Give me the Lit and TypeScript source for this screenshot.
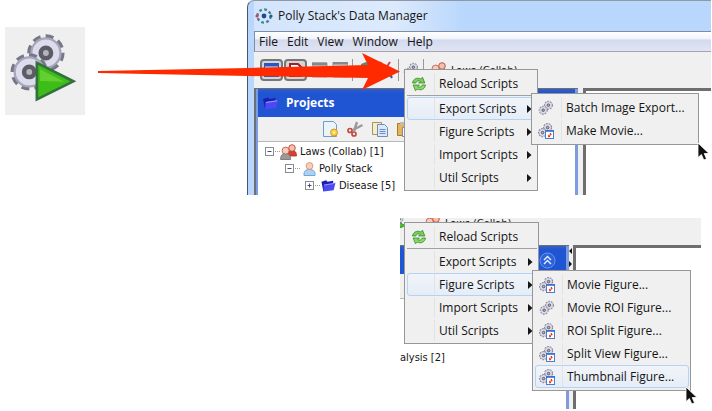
import { LitElement, html, svg, css, nothing } from "lit";
import { customElement, property } from "lit/decorators.js";

type Glyph = "gears" | "gears-window" | "reload" | "run" | "none";

interface Entry {
  label: string;
  icon?: Glyph;
  sub?: boolean;
  active?: boolean;
  divider?: boolean;
}

const gear = (x: number, y: number, r: number) => svg`
  <circle cx=${x} cy=${y} r=${r} fill="none" stroke="#77778a" stroke-width="1.100" stroke-dasharray="1.700 1.100"/>
  <circle cx=${x} cy=${y} r=${r * 0.9} fill="#dcdcec" stroke="#a6a6b8" stroke-width=".5"/>
  <circle cx=${x} cy=${y} r=${r * 0.32} fill="#b4b4bc" stroke="#5c5c66" stroke-width="1"/>`;

const glyphs: Record<Glyph, unknown> = {
  none: nothing,
  gears: svg`${gear(10.4, 5.2, 3.9)}${gear(5.2, 10.2, 3.9)}`,
  "gears-window": svg`${gear(9.6, 4.6, 4)}${gear(4.6, 9.6, 4)}
    <rect x="7.500" y="7.500" width="8" height="8" fill="#fff" stroke="#4a7fd0"/>
    <path d="M7 8h9" stroke="#3a6fc8" stroke-width="1.600"/>
    <path d="M12.200 10l1 1.400-1 1zM10.400 12.200l1.600 1-1.200 1z" fill="#e02a20" stroke="#e02a20" stroke-width=".8"/>`,
  reload: svg`
    <path d="M1.500 7C2 3 6 1 9.800 3L11.500 1.200l2.300 5.800H7.600l1.700-1.800C7.600 4.300 5.400 5 4.800 7z" fill="#7ccc58" stroke="#2f8a22" stroke-width=".8"/>
    <path d="M14.500 9c-.5 4-4.500 6-8.300 4L4.500 14.800 2.200 9h6.200l-1.700 1.800c1.700.9 3.900.2 4.500-1.800z" fill="#8cd868" stroke="#2f8a22" stroke-width=".8"/>`,
  run: svg`${gear(8.2, 4.2, 3.6)}${gear(4.5, 8.4, 3.6)}
    <path d="M6.200 6.400L14.300 10.500 6.200 14.500z" fill="#3ebc18" stroke="#34703c" stroke-width=".6"/>
    <path d="M6.900 7.800v2.600l5.400.2z" fill="#62d030"/>`,
};

const users = svg`
  <path d="M7.500 12c0-4 1.500-5.500 4.500-5.500s4.500 1.500 4.500 5.500z" fill="#d8402e" stroke="#a83226" stroke-width=".8"/>
  <circle cx="12" cy="4" r="3.300" fill="#f3c0ac" stroke="#bb4a3c" stroke-width=".9"/>
  <path d="M.6 15.500C.6 11 2.500 9.500 5.600 9.500s5 1.500 5 6z" fill="#9a9a9a" stroke="#6c6c6c" stroke-width=".8"/>
  <circle cx="5.600" cy="6.600" r="3.500" fill="#f6cdbb" stroke="#c0604e" stroke-width=".9"/>`;

const folder = svg`
  <path d="M1 4l5-1.500 1.500 1.500 6-1v9L3 14z" fill="#1d1db0"/>
  <path d="M3.500 7L16 5l-2 8-11 1.500z" fill="#4a4af4"/>
  <path d="M4 7.500L15 5.800" stroke="#9a9aff"/>`;

const shared = css`
  * { box-sizing: border-box; }
  button {
    font: inherit; color: inherit; background: none; border: 0;
    padding: 0; margin: 0; text-align: left; white-space: nowrap;
  }
  svg { display: block; flex: none; }
`;

@customElement("popup-menu")
export class PopupMenu extends LitElement {
  @property({ attribute: false }) entries: Entry[] = [];

  static styles = [shared, css`
    :host { display: block; }
    .menu {
      position: relative; height: 100%; padding: 2px 1px 2px 2px;
      background: #f0f0f0; border: 1px solid #979797;
      font: 12px/22px "Open Sans", "Noto Sans", sans-serif; color: #151515;
      display: flex; flex-direction: column;
    }
    .item {
      display: flex; align-items: center; height: 23px; width: 100%;
      padding: 0 3px; border: 1px solid transparent; border-radius: 3px;
    }
    .item.active {
      border-color: #b4d2f6;
      background: linear-gradient(#f1f4f9, #e6edf7);
    }
    .gutter {
      align-self: stretch; display: flex; align-items: center;
      width: 24px; margin-right: 4px; border-right: 1px solid #e2e3e3; flex: none;
    }
    .label { flex: 1; }
    .divider { height: 1px; margin: 0 0 1px; background: #a0a0a0; flex: none; }
  `];

  render() {
    return html`<div class="menu" role="menu">
      ${this.entries.map(e => html`
        <button class="item ${e.active ? "active" : ""}" role="menuitem">
          <span class="gutter"><svg width="16" height="16" viewBox="0 0 16 16">${glyphs[e.icon ?? "none"]}</svg></span>
          <span class="label">${e.label}</span>
          ${e.sub ? html`<svg width="5" height="8" viewBox="0 0 5 8"><path d="M0 0l4.500 4L0 8z" fill="#151515"/></svg>` : nothing}
        </button>
        ${e.divider ? html`<div class="divider" role="separator"></div>` : nothing}`)}
    </div>`;
  }
}

const scriptsMenu = (active: string): Entry[] => [
  { label: "Reload Scripts", icon: "reload", divider: true },
  ...["Export Scripts", "Figure Scripts", "Import Scripts", "Util Scripts"].map(label => ({
    label, sub: true, active: label === active,
  })),
];

const exportMenu: Entry[] = [
  { label: "Batch Image Export...", icon: "gears" },
  { label: "Make Movie...", icon: "gears-window" },
];

const figureMenu: Entry[] = [
  { label: "Movie Figure...", icon: "gears-window" },
  { label: "Movie ROI Figure...", icon: "gears" },
  { label: "ROI Split Figure...", icon: "gears-window" },
  { label: "Split View Figure...", icon: "gears-window" },
  { label: "Thumbnail Figure...", icon: "gears-window", active: true },
];

const pointer = html`<svg class="pointer" width="13" height="20" viewBox="0 0 13 20">
  <path d="M1 1v14.500l3.400-3 2.400 5.500 2.700-1.200L7.200 11.500H12z" fill="#111" stroke="#fff" stroke-width=".8"/></svg>`;

@customElement("app-root")
export class AppRoot extends LitElement {
  static styles = [shared, css`
    :host { display: block; background: #fff; color: #151515; font: 12px/16px "Open Sans", "Noto Sans", sans-serif; }
    .page { position: relative; display: flex; flex-direction: column; gap: 23px; min-height: 100vh; overflow: hidden; }
    .top { display: flex; align-items: flex-start; }
    .tile { margin: 27px 162px 0 5px; padding: 7px 4px; background: #efefef; flex: none; }
    .arrow { position: absolute; left: 98px; top: 53px; z-index: 3; }

    .window {
      position: relative; flex: 1; height: 195px; margin-right: 1px;
      display: flex; flex-direction: column;
      border: solid #4a5668; border-width: 1px 0 0 1px; border-top-color: #8f98a4;
      border-top-left-radius: 7px; background: #b9d7fc; padding-left: 6px;
    }
    .titlebar {
      height: 30px; display: flex; align-items: center; gap: 5px; padding-left: 1px; flex: none;
      background: linear-gradient(90deg, #d3e5fc, #dceafc 140px, #b9d7fc 210px);
    }
    .title { font-size: 12px; font-weight: 400; margin: 0; }
    .menubar {
      height: 21px; display: flex; align-items: center; gap: 9px; padding-left: 4px; flex: none;
      border: solid #7f8ca3; border-width: 1px 0 1px 1px; border-bottom-color: #a5a5ad;
      background: linear-gradient(#fff, #f2f4fb 35%, #d4daee 42%, #e0e4f4);
    }
    .toolbar { display: flex; align-items: center; height: 36px; padding-left: 6px; background: #f0f0f0; flex: none; overflow: hidden; }
    .toggle {
      width: 23px; height: 22px; margin-right: 1px; display: grid; place-items: center;
      border: 2px solid #777; border-radius: 4px; background: #d5d5d8;
    }
    .flat { margin-left: 4px; }
    .rule { width: 1px; height: 22px; background: #999; margin: 0 4px; flex: none; }
    .user { display: flex; align-items: center; gap: 4px; margin-left: 2px; white-space: nowrap; }
    .tahoma { font: 11px/17px "DejaVu Sans Condensed", "DejaVu Sans", sans-serif; }

    .body { flex: 1; display: flex; min-height: 0; }
    .side { width: 324px; display: flex; flex-direction: column; flex: none; background: #fff; border: solid #6b7076; border-width: 1px 0 0 2px; }
    .inner { flex: 1; display: flex; flex-direction: column; border: solid #7f9be0; border-width: 0 3px 0 2px; }
    .head {
      height: 28px; display: flex; align-items: center; gap: 8px; padding: 0 10px 0 4px; flex: none;
      color: #fff; background: linear-gradient(#3560c4, #1f55d2 4px);
    }
    .head h2 { font: bold 12px/16px "Open Sans", "Noto Sans", sans-serif; margin: 0; flex: 1; }
    .tools { height: 25px; display: flex; align-items: center; gap: 9px; padding-left: 64px; background: #f0f0f0; border-bottom: 1px solid #b8b8b8; flex: none; }
    .tree { list-style: none; margin: 0; padding: 1px 0 0 7px; }
    .row { display: flex; align-items: center; height: 17px; }
    .row.l1 { padding-left: 20px; }
    .row.l2 { padding-left: 40px; }
    .name { margin-left: 3px; white-space: nowrap; }
    .split { width: 5px; background: #f0f0f0; flex: none; }
    .canvas { flex: 1; background: #fff; border: solid #6e6e6e; border-width: 3px 0 0 3px; }

    .pane { position: relative; height: 191px; margin: 0 11px 0 400px; display: flex; flex-direction: column; background: #f0f0f0; }
    .pane .toolbar { height: 10px; margin-bottom: 17px; padding: 0; }
    .pane .side { width: 169px; border-left: 0; }
    .pane .inner { border-left: 0; }
    .pane .head { justify-content: flex-end; }
    .pane .split { padding: 3px 0; width: 4px; }
    .leaf { margin: 50px 0 0; }

    .menu-a, .menu-b, .sub-a, .sub-b, .pointer { position: absolute; z-index: 2; }
    .menu-a { left: 156px; top: 68px; width: 134px; height: 122px; }
    .sub-a { left: 283px; top: 92px; width: 168px; height: 52px; }
    .menu-b { left: 4px; top: 4px; width: 135px; height: 122px; }
    .sub-b { left: 132px; top: 52px; width: 159px; height: 121px; }
    .window .pointer { left: 449px; top: 141px; }
    .pane .pointer { left: 285px; top: 168px; }
  `];

  private box(open: boolean) {
    return html`<svg width="15" height="9" viewBox="0 0 15 9">
      <rect x=".5" y=".5" width="8" height="8" fill="#fff" stroke="#8c8c8c"/>
      <path d=${open ? "M2.500 4.500h4" : "M2.500 4.500h4M4.500 2.500v4"} stroke="#3a4f94"/>
      <path d="M10 4.500h5" stroke="#999" stroke-dasharray="1 1"/></svg>`;
  }

  private person() {
    return html`<svg width="13" height="14" viewBox="0 0 13 14">
      <path d="M1 13.500C.5 9 3 7.500 6.500 7.500S12.500 9 12 13.500z" fill="#a9d2f5" stroke="#5a96cc" stroke-width=".8"/>
      <circle cx="6.500" cy="4" r="3.400" fill="#f9cdb8" stroke="#d08a70" stroke-width=".8"/></svg>`;
  }

  render() {
    return html`<main class="page">
      <div class="top">
        <div class="tile"><svg width="72" height="74" viewBox="0 0 16 16.400">${glyphs.run}</svg></div>
        <svg class="arrow" width="304" height="38" viewBox="0 0 304 38">
          <path d="M0 18L150 15 270 12 264 0 302 18.500 264 37 270 25 150 23 0 20z" fill="#ff2a00"/></svg>

        <section class="window">
          <header class="titlebar">
            <svg width="18" height="18" viewBox="0 0 18 18">
              <circle cx="9" cy="9" r="2.400" fill="#1f4a8c"/>
              <circle cx="9" cy="9" r="6.600" fill="none" stroke="#4c8090" stroke-width="2.400" stroke-dasharray="2.800 2.380"/>
              <circle cx="2" cy="9" r="1.600" fill="#d43d4c"/><circle cx="16" cy="9" r="1.600" fill="#28569c"/></svg>
            <h1 class="title">Polly Stack's Data Manager</h1>
          </header>
          <nav class="menubar">
            ${["File", "Edit", "View", "Window", "Help"].map(m => html`<button>${m}</button>`)}
          </nav>
          <div class="toolbar">
            <button class="toggle" aria-label="Tree view"><svg width="15" height="14" viewBox="0 0 15 14">
              <rect x=".5" y=".5" width="14" height="13" fill="#dfe9fb" stroke="#2458c8"/><path d="M0 2h15" stroke="#2458c8" stroke-width="3"/></svg></button>
            <button class="toggle" aria-label="Viewer"><svg width="15" height="14" viewBox="0 0 15 14">
              <path d="M2 1h8l3 3v9H2z" fill="#fff" stroke="#a02028" stroke-width="2"/><path d="M5 9l4-4 3 2-4 4z" fill="#cf3038"/></svg></button>
            <svg class="flat" width="36" height="16" viewBox="0 0 36 16">
              <path d="M0 1h15v14H0zM21 0h15v15H21z" fill="#d0d0d0" stroke="#999"/><path d="M0 2h15M21 1h15" stroke="#888" stroke-width="3"/></svg>
            <span class="rule"></span>
            <svg width="37" height="18" viewBox="0 0 37 18"><path d="M4 3l5-2 5 3v9l-6 3-4-3z" fill="#5a8a66"/>
              <path d="M23 1l12 15M33 1L23 16" stroke="#d0404c" stroke-width="2"/><path d="M32 13l3 4" stroke="#3a54c0" stroke-width="2"/></svg>
            <span class="rule"></span>
            <svg width="16" height="16" viewBox="0 0 16 16">${glyphs.gears}</svg>
            <span class="rule"></span>
            <span class="user tahoma"><svg width="17" height="16" viewBox="0 0 17 16">${users}</svg>Laws (Collab)</span>
          </div>
          <div class="body">
            <aside class="side"><div class="inner">
              <div class="head"><svg width="16" height="16" viewBox="0 0 16 16">${folder}</svg><h2>Projects</h2></div>
              <div class="tools">
                <svg width="16" height="16" viewBox="0 0 16 16"><path d="M1.500.5h10l3 3v12h-13z" fill="#eaf4fd" stroke="#6f9cc8"/>
                  <circle cx="12" cy="11.500" r="3.500" fill="#f9cf3c" stroke="#dd9b20"/><circle cx="12" cy="11.500" r="1.300" fill="#fff3a8"/></svg>
                <svg width="16" height="16" viewBox="0 0 16 16"><path d="M10 1L7 10M15.500 4L6 9" stroke="#9a9a9a" stroke-width="2.400"/>
                  <circle cx="3" cy="9.500" r="2" fill="none" stroke="#c04a44" stroke-width="1.700"/><circle cx="7" cy="13" r="2" fill="none" stroke="#c04a44" stroke-width="1.700"/></svg>
                <svg width="16" height="16" viewBox="0 0 16 16"><path d="M.5 1.500h9v12h-9z" fill="#f6edc8" stroke="#a8935a"/>
                  <path d="M5.500 3.500h7l3 3v9h-10z" fill="#dce9fa" stroke="#6f8fb8"/><path d="M7.500 8.500h6M7.500 10.500h6M7.500 12.500h6" stroke="#6a8cc0"/></svg>
                <svg width="16" height="16" viewBox="0 0 16 16"><path d="M.5 2.500h12v12H.5z" fill="#e8b458" stroke="#a87a30"/><path d="M3 1h7v3H3z" fill="#bbb"/>
                  <path d="M5.500 6.500h9v9h-9z" fill="#fff" stroke="#889"/></svg>
              </div>
              <ul class="tree tahoma">
                <li class="row">${this.box(true)}<svg width="17" height="16" viewBox="0 0 17 16">${users}</svg><span class="name">Laws (Collab) [1]</span></li>
                <li class="row l1">${this.box(true)}<svg width="3" height="1"></svg>${this.person()}<span class="name">Polly Stack</span></li>
                <li class="row l2">${this.box(false)}<svg width="16" height="15" viewBox="0 0 16 16">${folder}</svg><span class="name">Disease [5]</span></li>
              </ul>
            </div></aside>
            <div class="split"></div>
            <div class="canvas"></div>
          </div>
          <popup-menu class="menu-a" .entries=${scriptsMenu("Export Scripts")}></popup-menu>
          <popup-menu class="sub-a" .entries=${exportMenu}></popup-menu>
          ${pointer}
        </section>
      </div>

      <section class="pane">
        <div class="toolbar">
          <svg width="7" height="16" viewBox="9 0 7 16">${glyphs.run}</svg>
          <svg width="15" height="1"></svg>
          <span class="user tahoma"><svg width="17" height="16" viewBox="0 0 17 16">${users}</svg>Laws (Collab)</span>
        </div>
        <div class="body">
          <aside class="side"><div class="inner">
            <div class="head"><button aria-label="Collapse"><svg width="17" height="17" viewBox="0 0 17 17">
              <circle cx="8.500" cy="8.500" r="7.500" fill="#2a62da" stroke="#6c96ee"/>
              <path d="M5 8l3.500-3.500L12 8M5 12l3.500-3.500L12 12" fill="none" stroke="#e6eeff" stroke-width="1.400"/></svg></button></div>
            <div class="tools"></div>
            <p class="leaf tahoma">alysis [2]</p>
          </div></aside>
          <div class="split"><svg width="4" height="20" viewBox="0 0 4 20"><path d="M3 0L0 3l3 3zM0 13l3 3-3 3z" fill="#111"/></svg></div>
          <div class="canvas"></div>
        </div>
        <popup-menu class="menu-b" .entries=${scriptsMenu("Figure Scripts")}></popup-menu>
        <popup-menu class="sub-b" .entries=${figureMenu}></popup-menu>
        ${pointer}
      </section>
    </main>`;
  }
}
